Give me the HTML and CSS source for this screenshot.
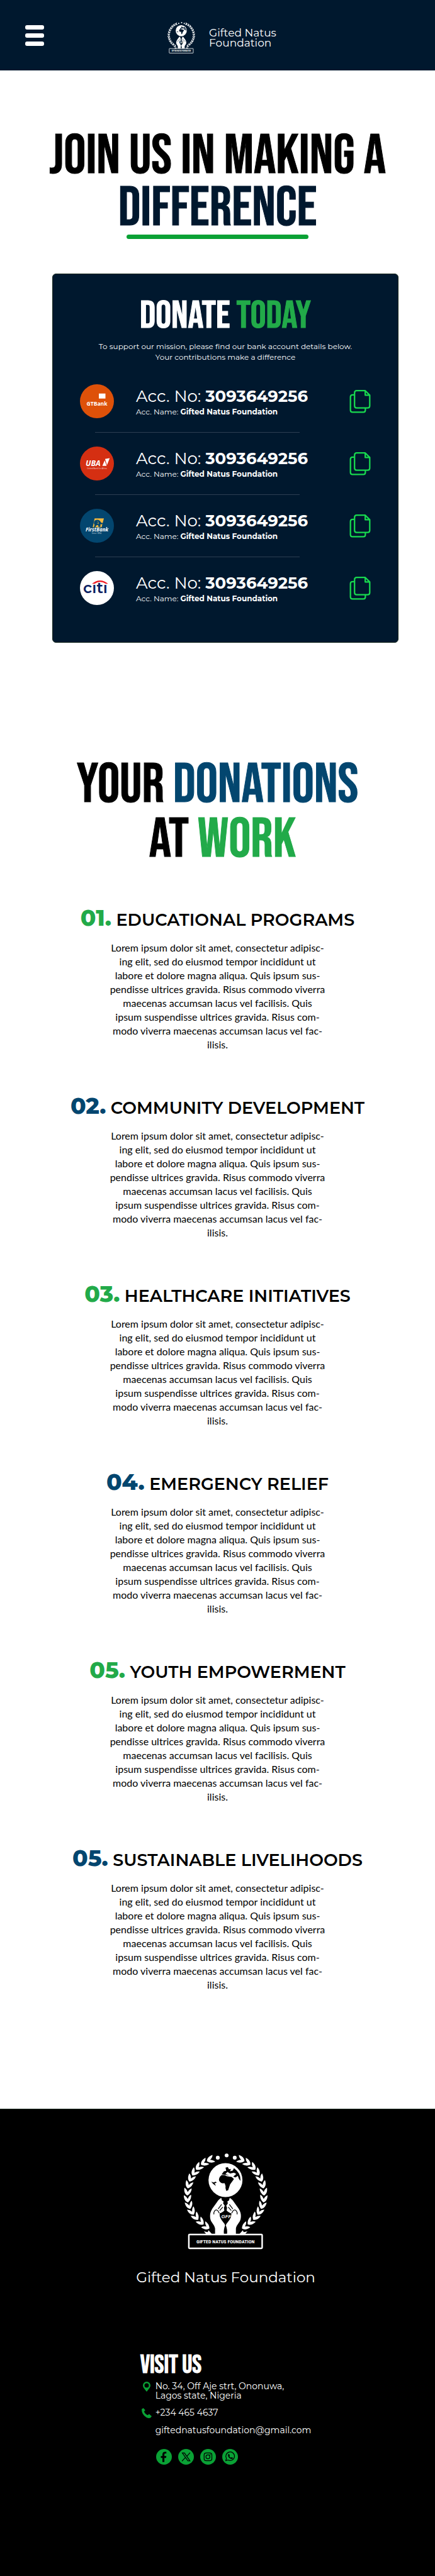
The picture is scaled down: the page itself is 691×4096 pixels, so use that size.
FILE: index.html
```html
<!DOCTYPE html>
<html lang="en">
<head>
<meta charset="utf-8">
<meta name="viewport" content="width=device-width, initial-scale=1">
<title>Donate | Gifted Natus Foundation</title>
<link rel="stylesheet" href="styles.css">
</head>
<body>
<svg class="sprite" aria-hidden="true">
  <defs>
    <path id="leaf" d="M0 10C-7 7-10 0-9-10Q-3-7 0 1Q4-7 10-9Q10 3 0 10Z"/>
    <g id="branch">
      <use href="#leaf" transform="translate(69 16) rotate(66)"/>
      <use href="#leaf" transform="translate(53 24) rotate(57)"/>
      <use href="#leaf" transform="translate(39 35) rotate(45)"/>
      <use href="#leaf" transform="translate(28 49) rotate(34)"/>
      <use href="#leaf" transform="translate(19 64) rotate(22)"/>
      <use href="#leaf" transform="translate(13 81) rotate(14)"/>
      <use href="#leaf" transform="translate(10 99) rotate(3)"/>
      <use href="#leaf" transform="translate(10 117) rotate(-6)"/>
      <use href="#leaf" transform="translate(14 134) rotate(-18)"/>
      <use href="#leaf" transform="translate(21 150) rotate(-30)"/>
      <use href="#leaf" transform="translate(31 164) rotate(-40)"/>
      <use href="#leaf" transform="translate(44 177) rotate(-49)"/>
      <use href="#leaf" transform="translate(58 189) rotate(-58)"/>
      <path d="M52 202l10 2 2-5 9 10H58z"/>
    </g>
    <g id="hand">
      <path d="M97 115C93 117 89 121 86 126L74 143C70 150 68 155 68 162C68 168 69 172 71 176C76 184 80 188 81 195V209H104C103 202 104 194 107 187C106 181 101 178 97 171C94 166 92 161 93 155C97 154 101 152 105 148L104 141L106 135L102 130L103 124L99 122Z"/>
      <path class="emblem-line" d="M78 158C76 151 82 145 86 147C90 149 90 152 92 155M89 144L98 132M93 148L101 139"/>
    </g>
    <symbol id="emblem" viewBox="0 0 217 249">
      <g fill="currentColor">
        <use href="#branch"/>
        <use href="#branch" transform="translate(217 0) scale(-1 1)"/>
        <circle cx="88" cy="11" r="5"/><circle cx="111" cy="5" r="5"/><circle cx="132" cy="11" r="5"/>
        <circle cx="108" cy="69" r="44"/>
        <use href="#hand"/>
        <use href="#hand" transform="translate(216 0) scale(-1 1)"/>
      </g>
      <g class="emblem-hole">
        <path d="M98 56Q92 60 91 68Q92 75 99 77L106 77Q109 84 108 90L110 97L115 95L120 80L130 66L124 61L111 59L106 56Z"/>
        <path d="M98 54L104 46L110 45L108 37L114 35L117 41L122 40L120 46L127 44L130 38L137 44Q143 50 146 60L147 71L143 66L140 58L134 62L128 60L136 53L130 50L120 52L113 48L108 53L118 57L112 56Z"/>
        <path d="M71 73L77 75L83 73L85 76L80 77L83 84L76 79Z"/>
      </g>
      <rect x="13" y="210" width="190" height="36" rx="2" fill="none" stroke="currentColor" stroke-width="4"/>
      <text class="emblem-name" x="108" y="233" text-anchor="middle">GIFTED NATUS FOUNDATION</text>
      <text class="emblem-mono" x="110" y="168" text-anchor="middle">GFF</text>
    </symbol>
    <symbol id="copy" viewBox="73 81 162 181">
      <g fill="none" stroke="currentColor" stroke-width="11" stroke-linejoin="round">
        <path d="M194 87H128Q111 87 111 104V204Q111 221 128 221H212Q229 221 229 204V122Z"/>
        <path d="M194 87V122H229"/>
        <path d="M111 120H95Q79 120 79 137V237Q79 254 95 254H180Q195 254 195 237V221"/>
      </g>
    </symbol>
  </defs>
</svg>

<header class="topbar">
  <button class="menu" type="button" aria-label="Open menu"><span></span><span></span><span></span></button>
  <a class="brand" href="#">
    <svg class="brand-logo" aria-hidden="true"><use href="#emblem"/></svg>
    <span>Gifted Natus<br>Foundation</span>
  </a>
</header>

<main>
  <section class="hero">
    <h1 class="display">JOIN US IN MAKING A <span class="navy">DIFFERENCE</span></h1>
    <div class="rule"></div>
  </section>

  <section class="card">
    <h2 class="card-title">DONATE <span class="green">TODAY</span></h2>
    <p class="card-lead">To support our mission, please find our bank account details below.<br>Your contributions make a difference</p>
    <ul class="accounts">
      <li class="account">
        <svg class="bank" viewBox="0 0 88 88" role="img" aria-label="GTBank">
          <circle cx="44" cy="44" r="44" fill="#de5109"/>
          <rect x="49" y="24" width="17" height="13" fill="#fff"/>
          <text class="bank-gt" x="44" y="55" text-anchor="middle">GTBank</text>
        </svg>
        <div class="account-text">
          <p class="account-no">Acc. No: <b>3093649256</b></p>
          <p class="account-name">Acc. Name: <b>Gifted Natus Foundation</b></p>
        </div>
        <button class="copy" type="button" aria-label="Copy GTBank account number"><svg><use href="#copy"/></svg></button>
      </li>
      <li class="account">
        <svg class="bank" viewBox="0 0 88 88" role="img" aria-label="United Bank for Africa">
          <circle cx="44" cy="44" r="44" fill="#d52f12"/>
          <text class="bank-uba" x="34" y="50" text-anchor="middle">UBA</text>
          <path d="M58 50L64 36L69 50ZM65 32L77 30L70 48Z" fill="#fff"/>
          <text class="bank-small" x="44" y="59" text-anchor="middle">United Bank for Africa</text>
        </svg>
        <div class="account-text">
          <p class="account-no">Acc. No: <b>3093649256</b></p>
          <p class="account-name">Acc. Name: <b>Gifted Natus Foundation</b></p>
        </div>
        <button class="copy" type="button" aria-label="Copy UBA account number"><svg><use href="#copy"/></svg></button>
      </li>
      <li class="account">
        <svg class="bank" viewBox="0 0 88 88" role="img" aria-label="FirstBank">
          <circle cx="44" cy="44" r="44" fill="#03466f"/>
          <path d="M38 25H62L56 48H33Z" fill="#f3b93f"/>
          <path d="M37 32Q41 27 48 29Q53 31 54 35Q58 38 61 37Q58 41 53 40L53 47H48L47 42L42 43L40 48H36L38 41Q35 40 37 32Z" fill="#03466f"/>
          <path d="M45 32Q49 34 48 39L44 37" fill="none" stroke="#f3b93f" stroke-width="1"/>
          <text class="bank-first" x="44" y="59" text-anchor="middle">FirstBank</text>
          <text class="bank-small" x="43" y="65" text-anchor="middle">Since 1894</text>
        </svg>
        <div class="account-text">
          <p class="account-no">Acc. No: <b>3093649256</b></p>
          <p class="account-name">Acc. Name: <b>Gifted Natus Foundation</b></p>
        </div>
        <button class="copy" type="button" aria-label="Copy FirstBank account number"><svg><use href="#copy"/></svg></button>
      </li>
      <li class="account">
        <svg class="bank" viewBox="0 0 88 88" role="img" aria-label="Citi">
          <circle cx="44" cy="44" r="44" fill="#fff"/>
          <text class="bank-citi" x="40" y="57" text-anchor="middle">cıtı</text>
          <path d="M31 33Q52 16 73 33L67 33Q52 23 38 33Z" fill="#ee1c25"/>
        </svg>
        <div class="account-text">
          <p class="account-no">Acc. No: <b>3093649256</b></p>
          <p class="account-name">Acc. Name: <b>Gifted Natus Foundation</b></p>
        </div>
        <button class="copy" type="button" aria-label="Copy Citi account number"><svg><use href="#copy"/></svg></button>
      </li>
    </ul>
  </section>

  <section class="work">
    <h2 class="display display-loose">YOUR <span class="blue">DONATIONS</span><span class="second-line">AT <span class="green">WORK</span></span></h2>
    <div class="programs">
      <article>
        <h3 class="program-title"><span class="num green">01.</span> EDUCATIONAL PROGRAMS</h3>
        <p class="program-text">Lorem ipsum dolor sit amet, consectetur adipisc-<br>ing elit, sed do eiusmod tempor incididunt ut<br>labore et dolore magna aliqua. Quis ipsum sus-<br>pendisse ultrices gravida. Risus commodo viverra<br>maecenas accumsan lacus vel facilisis. Quis<br>ipsum suspendisse ultrices gravida. Risus com-<br>modo viverra maecenas accumsan lacus vel fac-<br>ilisis.</p>
      </article>
      <article>
        <h3 class="program-title"><span class="num blue">02.</span> COMMUNITY DEVELOPMENT</h3>
        <p class="program-text">Lorem ipsum dolor sit amet, consectetur adipisc-<br>ing elit, sed do eiusmod tempor incididunt ut<br>labore et dolore magna aliqua. Quis ipsum sus-<br>pendisse ultrices gravida. Risus commodo viverra<br>maecenas accumsan lacus vel facilisis. Quis<br>ipsum suspendisse ultrices gravida. Risus com-<br>modo viverra maecenas accumsan lacus vel fac-<br>ilisis.</p>
      </article>
      <article>
        <h3 class="program-title"><span class="num green">03.</span> HEALTHCARE INITIATIVES</h3>
        <p class="program-text">Lorem ipsum dolor sit amet, consectetur adipisc-<br>ing elit, sed do eiusmod tempor incididunt ut<br>labore et dolore magna aliqua. Quis ipsum sus-<br>pendisse ultrices gravida. Risus commodo viverra<br>maecenas accumsan lacus vel facilisis. Quis<br>ipsum suspendisse ultrices gravida. Risus com-<br>modo viverra maecenas accumsan lacus vel fac-<br>ilisis.</p>
      </article>
      <article>
        <h3 class="program-title"><span class="num blue">04.</span> EMERGENCY RELIEF</h3>
        <p class="program-text">Lorem ipsum dolor sit amet, consectetur adipisc-<br>ing elit, sed do eiusmod tempor incididunt ut<br>labore et dolore magna aliqua. Quis ipsum sus-<br>pendisse ultrices gravida. Risus commodo viverra<br>maecenas accumsan lacus vel facilisis. Quis<br>ipsum suspendisse ultrices gravida. Risus com-<br>modo viverra maecenas accumsan lacus vel fac-<br>ilisis.</p>
      </article>
      <article>
        <h3 class="program-title"><span class="num green">05.</span> YOUTH EMPOWERMENT</h3>
        <p class="program-text">Lorem ipsum dolor sit amet, consectetur adipisc-<br>ing elit, sed do eiusmod tempor incididunt ut<br>labore et dolore magna aliqua. Quis ipsum sus-<br>pendisse ultrices gravida. Risus commodo viverra<br>maecenas accumsan lacus vel facilisis. Quis<br>ipsum suspendisse ultrices gravida. Risus com-<br>modo viverra maecenas accumsan lacus vel fac-<br>ilisis.</p>
      </article>
      <article>
        <h3 class="program-title"><span class="num blue">05.</span> SUSTAINABLE LIVELIHOODS</h3>
        <p class="program-text">Lorem ipsum dolor sit amet, consectetur adipisc-<br>ing elit, sed do eiusmod tempor incididunt ut<br>labore et dolore magna aliqua. Quis ipsum sus-<br>pendisse ultrices gravida. Risus commodo viverra<br>maecenas accumsan lacus vel facilisis. Quis<br>ipsum suspendisse ultrices gravida. Risus com-<br>modo viverra maecenas accumsan lacus vel fac-<br>ilisis.</p>
      </article>
    </div>
  </section>
</main>

<footer class="footer">
  <svg class="footer-logo" role="img" aria-label="Gifted Natus Foundation emblem"><use href="#emblem"/></svg>
  <p class="footer-name">Gifted Natus Foundation</p>
  <section class="visit">
    <h2 class="visit-title">VISIT US</h2>
    <address class="contact">
      <svg class="contact-icon" viewBox="0 0 16 16" aria-hidden="true"><path fill="#0aa135" fill-rule="evenodd" d="M8 0A6 6 0 0 0 2 6C2 9 5 12 8 16C11 12 14 9 14 6A6 6 0 0 0 8 0ZM8 2.500A3.500 3.500 0 1 1 8 9.500A3.500 3.500 0 0 1 8 2.500Z"/></svg>
      <span>No. 34, Off Aje strt, Ononuwa,<br>Lagos state, Nigeria</span>
      <svg class="contact-icon" viewBox="0 0 72 72" aria-hidden="true"><path fill="#0aa135" d="M0 8L12 0L26 15L17 26Q24 42 42 51L54 43L72 58L64 69Q52 76 33 66Q0 46 0 8Z"/></svg>
      <a href="tel:+2344654637">+234 465 4637</a>
      <a class="mail" href="mailto:giftednatusfoundation@gmail.com">giftednatusfoundation@gmail.com</a>
    </address>
    <nav class="social" aria-label="Social media">
      <a href="#" aria-label="Facebook"><svg viewBox="0 0 120 120"><circle cx="60" cy="60" r="60" fill="#0aa135"/><path d="M48 99V68H36V54H48V43C48 28 56 21 68 21H78V35H70C65 35 63 38 63 43V54H78L76 68H63V99Z"/></svg></a>
      <a href="#" aria-label="X"><svg viewBox="0 0 120 120"><circle cx="60" cy="60" r="60" fill="#0aa135"/><path fill="none" stroke="#000" stroke-width="6" d="M32 31H48L90 91H74ZM91 28L65 57M29 93L56 64"/></svg></a>
      <a href="#" aria-label="Instagram"><svg viewBox="0 0 120 120"><circle cx="60" cy="60" r="60" fill="#0aa135"/><g fill="none" stroke="#000" stroke-width="6"><rect x="30" y="30" width="59" height="59" rx="15"/><circle cx="59" cy="60" r="15"/></g><circle cx="76" cy="43" r="4"/></svg></a>
      <a href="#" aria-label="WhatsApp"><svg viewBox="0 0 120 120"><circle cx="60" cy="60" r="60" fill="#0aa135"/><path fill="none" stroke="#000" stroke-width="6" stroke-linejoin="round" d="M27 90L32 72A33 33 0 1 1 44 84Z"/><path d="M46 40L52 38L58 50L54 55Q58 63 67 67L72 62L82 68Q80 76 72 77Q60 76 50 65Q41 53 46 40Z"/></svg></a>
    </nav>
  </section>
</footer>
</body>
</html>
```
FILE: styles.css
```css
:root {
  --navy: #00182e;
  --blue: #03466f;
  --green: #22aa49;
  --leaf: #0aa135;
  --sans: "Montserrat", "Open Sans", sans-serif;
  --display: "Bebas Neue", "Oswald", "Roboto Condensed", sans-serif;
}

* { box-sizing: border-box; }

body {
  margin: 0;
  background: #fff;
  color: #000;
  font-family: var(--sans);
}

h1, h2, h3, p, ul { margin: 0; padding: 0; }
a { color: inherit; text-decoration: none; }
button { padding: 0; border: 0; background: none; cursor: pointer; }
svg { display: block; }
.sprite { position: absolute; width: 0; height: 0; }

.navy { color: var(--navy); }
.blue { color: var(--blue); }
.green { color: var(--green); }

.emblem-hole { fill: var(--hole); }
.emblem-line { fill: none; stroke: var(--hole); stroke-width: 2px; }
.emblem-name { fill: currentColor; font: 700 13px "Roboto Condensed", "Liberation Sans", sans-serif; }
.emblem-mono { fill: currentColor; font: italic 700 13px "Liberation Sans", sans-serif; }

/* Header */
.topbar {
  display: grid;
  grid-template-columns: 1fr auto 1fr;
  align-items: center;
  height: 112px;
  padding: 8px 26px 0 40px;
  background: var(--navy);
  color: #fff;
}
.menu {
  display: grid;
  gap: 6px;
  width: 30px;
  margin-bottom: 8px;
}
.menu span { height: 7px; border-radius: 3px; background: #fff; }
.brand {
  --hole: var(--navy);
  display: flex;
  align-items: center;
  gap: 22px;
  font-size: 17px;
  line-height: 16px;
}
.brand-logo { width: 44px; height: 50px; }

/* Hero */
.hero { padding: 95px 24px 0; }
.display {
  font: 400 88px/83px var(--display);
  text-align: center;
}
.display, .card-title, .visit-title { -webkit-text-stroke: 1px currentColor; }
.display span, .card-title span { -webkit-text-stroke-color: currentColor; }
.hero .navy { display: block; }
.rule {
  width: 289px;
  height: 7px;
  margin: 0 auto;
  border-radius: 4px;
  background: var(--leaf);
}

/* Donation card */
.card {
  margin: 55px 58px 0 83px;
  padding: 34px 43px 59px;
  border: 1px solid #14281c;
  border-radius: 6px;
  background: var(--navy);
  color: #fff;
}
.card-title {
  font: 400 62px/65px var(--display);
  text-align: center;
}
.card-lead {
  margin-top: 7px;
  font-size: 12px;
  line-height: 17px;
  text-align: center;
}
.accounts { margin-top: 35px; list-style: none; }
.account {
  display: grid;
  grid-template-columns: 54px 1fr 34px;
  align-items: center;
  column-gap: 35px;
}
.account:not(:last-child)::after {
  content: "";
  grid-column: 1 / -1;
  height: 1px;
  margin: 22px 113px 22px 24px;
  background: #2d3f52;
}
.bank { width: 54px; height: 54px; }
.bank text { fill: #fff; font-family: "Noto Sans", sans-serif; font-weight: 700; }
.bank .bank-gt { font-size: 14px; }
.bank .bank-uba { font-size: 20px; font-style: italic; }
.bank .bank-first { font-size: 13px; font-style: italic; }
.bank .bank-small { font-size: 5px; font-weight: 400; opacity: .7; }
.bank .bank-citi { fill: #0b1f63; font-family: var(--sans); font-size: 40px; font-weight: 600; }
.account-text { display: grid; gap: 4px; padding-top: 3px; white-space: nowrap; }
.account-no { font-size: 26px; line-height: 26px; }
.account-name { font-size: 12px; line-height: 16px; }
.copy { color: #18d94f; }
.copy svg { width: 34px; height: 37px; }

/* Programs */
.work { padding: 183px 24px 186px; text-align: center; }
.display-loose { line-height: 87px; }
.second-line { display: block; padding-left: 16px; }
.programs { display: grid; gap: 68px; margin-top: 62px; }
.program-title { font-size: 27px; font-weight: 600; line-height: 28px; }
.num { font-size: 36px; font-weight: 800; line-height: 36px; }
.program-text {
  margin-top: 19px;
  font-family: Lato, sans-serif;
  font-size: 16px;
  line-height: 22px;
}

/* Footer */
.footer {
  --hole: #000;
  display: flex;
  flex-direction: column;
  align-items: center;
  padding: 70px 0 178px 26px;
  border-top: 1px solid #14281c;
  background: #000;
  color: #fff;
}
.footer-logo { width: 133px; height: 153px; }
.footer-name { margin-top: 29px; font-size: 23px; line-height: 30px; }
.visit { margin-top: 106px; }
.visit-title { font: 400 40px/39px var(--display); }
.contact {
  display: grid;
  grid-template-columns: 16px auto;
  gap: 12px 6px;
  margin-top: 6px;
  padding-left: 2px;
  font-size: 14px;
  font-style: normal;
  line-height: 15px;
}
.contact-icon { width: 16px; height: 16px; }
.mail { grid-column: 2; }
.social { display: flex; gap: 10px; margin-top: 22px; padding-left: 25px; }
.social svg { width: 25px; height: 25px; }
```
